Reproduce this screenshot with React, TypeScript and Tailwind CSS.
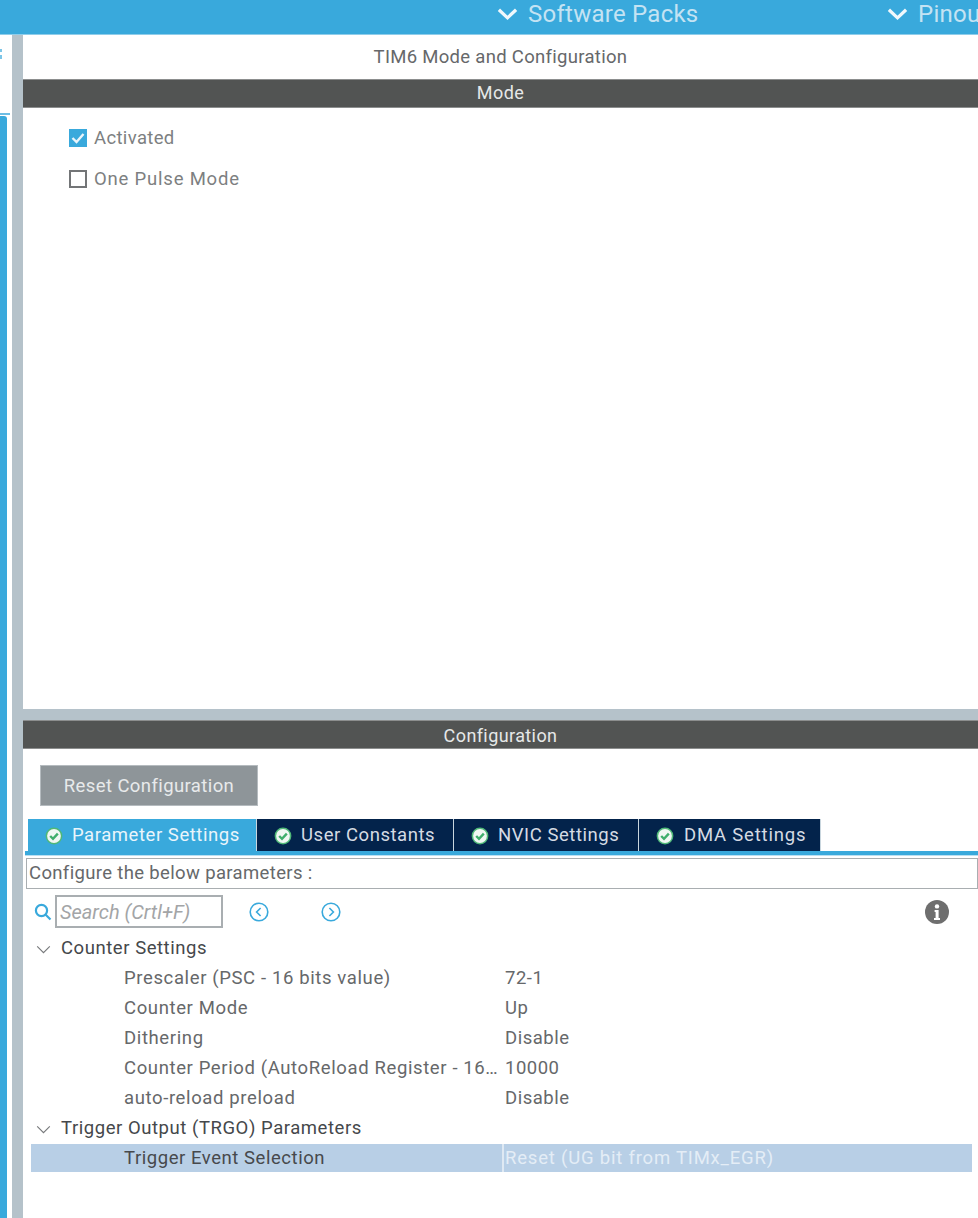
import React from "react";

const font = { fontFamily: "Roboto, sans-serif" };

function Chevron({ className }: { className: string }) {
  return (
    <svg viewBox="0 0 22 14" className={className} fill="none" stroke="currentColor" strokeWidth="3.4">
      <path d="M2 2.5 L11 11 L20 2.5" />
    </svg>
  );
}

function TabCheck() {
  return (
    <svg viewBox="0 0 18 18" className="h-[18px] w-[18px] shrink-0">
      <circle cx="9" cy="9" r="8.4" fill="#4fb878" />
      <circle cx="9" cy="9" r="6.9" fill="#f0f7f3" />
      <path d="M5.2 9 L8 11.8 L12.8 6.6" fill="none" stroke="#3fae6c" strokeWidth="2.4" />
    </svg>
  );
}

function Tab({ label, active, width, labelClass }: { label: string; active?: boolean; width: string; labelClass: string }) {
  return (
    <div
      className={`flex h-[32px] items-center gap-[9px] border-r border-[#c9d6de] pl-[17px] pt-[2px] text-[18.5px] ${width} ${
        active ? "bg-[#39a9dc] text-[#eaf5fb]" : "bg-[#03234b] text-[#d5dbe3]"
      }`}
    >
      <TabCheck />
      <span className={`whitespace-nowrap ${labelClass}`}>{label}</span>
    </div>
  );
}

function Row({ name, value }: { name: string; value: string }) {
  return (
    <div className="flex h-[30px] items-center pt-[2px] text-[18.5px] tracking-[0.62px] text-[#66686a]">
      <div className="w-[474px] shrink-0 truncate pl-[93px] pr-[5px]">{name}</div>
      <div className="whitespace-nowrap tracking-[0.5px]">{value}</div>
    </div>
  );
}

function Group({ label }: { label: string }) {
  return (
    <div className="flex h-[30px] items-center pt-[2px] text-[18.5px] tracking-[0.55px] text-[#45484b]">
      <div className="flex w-[30px] pl-[5px]">
        <svg viewBox="0 0 16 10" className="h-[9px] w-[15px]" fill="none" stroke="#77797b" strokeWidth="1.3">
          <path d="M1 1.5 L8 8.5 L15 1.5" />
        </svg>
      </div>
      <span className="whitespace-nowrap">{label}</span>
    </div>
  );
}

function Bar({ label, lower }: { label: string; lower?: boolean }) {
  return (
    <div
      className={`flex h-[29px] shrink-0 items-center justify-center border-y border-[#8c8e8e] bg-[#525453] text-[18px] tracking-[0.4px] text-[#e6e8e8] ${
        lower ? "pt-[1px]" : "pb-[2px]"
      }`}
    >
      {label}
    </div>
  );
}

export default function App() {
  return (
    <div className="flex h-[1218px] w-[978px] flex-col overflow-hidden bg-white" style={font}>
      <header className="flex h-[35px] shrink-0 items-center border-b border-[#8fcdea] bg-[#39a9dc] pb-[6px] text-[24px] tracking-[0.25px] text-[#c4e3f3]">
        <div className="ml-[497px] flex w-[390px] shrink-0 items-center gap-[10px]">
          <Chevron className="h-[14px] w-[21px] text-[#f0f8fc]" />
          <span className="whitespace-nowrap">Software Packs</span>
        </div>
        <div className="flex shrink-0 items-center gap-[10px]">
          <Chevron className="h-[14px] w-[21px] text-[#f0f8fc]" />
          <span className="whitespace-nowrap">Pinout</span>
        </div>
      </header>
      <div className="flex min-h-0 flex-1">
        <aside className="flex w-[12px] shrink-0 flex-col">
          <div className="mt-[14px] h-[3px] w-[2px] bg-[#7cc5e7]" />
          <div className="mt-[3px] h-[4px] w-[2px] bg-[#7cc5e7]" />
          <div className="mt-[54px] h-[2px] w-[10px] bg-[#6dbde4]" />
          <div className="mt-[1px] w-[7px] flex-1 rounded-tr-[3px] bg-[#39a9dc]" />
        </aside>
        <div className="w-[11px] shrink-0 bg-[#b5c2ca]" />
        <main className="flex min-w-0 flex-1 flex-col">
          <section className="flex h-[674px] shrink-0 flex-col">
            <div className="flex h-[44px] shrink-0 items-center justify-center pt-[2px] text-[18.5px] tracking-[0.3px] text-[#66686a]">
              TIM6 Mode and Configuration
            </div>
            <Bar label="Mode" />
            <div className="flex flex-col gap-[19px] pl-[46px] pt-[19px] text-[18.5px] text-[#7d7f81]">
              <label className="flex h-[22px] items-center gap-[7px] tracking-[0.35px]">
                <span className="flex h-[18px] w-[18px] items-center justify-center bg-[#39a9dc]">
                  <svg viewBox="0 0 18 18" className="h-[18px] w-[18px]" fill="none" stroke="#eaf5fb" strokeWidth="2.4">
                    <path d="M3.5 9 L7.5 13 L14.5 5" />
                  </svg>
                </span>
                <span className="pt-[1px]">Activated</span>
              </label>
              <label className="flex h-[22px] items-center gap-[7px] tracking-[0.8px]">
                <span className="h-[18px] w-[18px] border-2 border-[#737577] bg-white" />
                <span className="pt-[1px]">One Pulse Mode</span>
              </label>
            </div>
          </section>
          <div className="h-[11px] shrink-0 bg-[#b5c2ca]" />
          <section className="flex min-h-0 flex-1 flex-col">
            <Bar label="Configuration" lower />
            <div className="pl-[17px] pt-[16px]">
              <button className="flex h-[41px] w-[218px] items-center justify-center border border-[#b5bbbf] bg-[#8e9599] pt-[2px] text-[18.5px] tracking-[0.4px] text-[#e8eaeb]">
                Reset Configuration
              </button>
            </div>
            <div className="ml-[5px] mt-[13px] flex w-[793px]">
              <Tab label="Parameter Settings" active width="w-[229px]" labelClass="tracking-[0.55px]" />
              <Tab label="User Constants" width="w-[197px]" labelClass="tracking-[0.55px]" />
              <Tab label="NVIC Settings" width="w-[185px]" labelClass="tracking-[0.55px]" />
              <Tab label="DMA Settings" width="w-[182px]" labelClass="ml-[1px] tracking-[0.8px]" />
            </div>
            <div className="ml-[2px] h-[5px] shrink-0 border-b border-[#b8dff2] bg-[#39a9dc]" />
            <div className="ml-[3px] mt-[2px] flex h-[31px] items-center border border-[#a9aeb1] pl-[2px] text-[18.5px] tracking-[0.35px] text-[#66686a]">
              Configure the below parameters :
            </div>
            <div className="relative ml-[11px] mt-[6px] flex h-[33px] items-center">
              <svg viewBox="0 0 18 18" className="h-[18px] w-[18px]" fill="none" stroke="#39a9dc" strokeWidth="2.2">
                <circle cx="7.5" cy="7.5" r="5.6" />
                <path d="M11.5 11.5 L16.5 16.5" />
              </svg>
              <div className="ml-[3px] flex h-[33px] w-[168px] items-center border-2 border-[#a9aeb1] pl-[3px] text-[20px] italic text-[#a3a5a7]">
                Search (Crtl+F)
              </div>
              <svg viewBox="0 0 20 20" className="ml-[26px] h-[20px] w-[20px]" fill="none" stroke="#39a9dc" strokeWidth="1.6">
                <circle cx="10" cy="10" r="8.8" />
                <path d="M11.6 6 L7.6 10 L11.6 14" />
              </svg>
              <svg viewBox="0 0 20 20" className="ml-[52px] h-[20px] w-[20px]" fill="none" stroke="#39a9dc" strokeWidth="1.6">
                <circle cx="10" cy="10" r="8.8" />
                <path d="M8.4 6 L12.4 10 L8.4 14" />
              </svg>
              <svg viewBox="0 0 24 24" className="ml-[584px] h-[24px] w-[24px]">
                <circle cx="12" cy="12" r="12" fill="#6e6e6e" />
                <circle cx="12" cy="6.4" r="2.2" fill="#fff" />
                <path d="M9.6 10h4v8h1.4v2H9v-2h1.6v-6H9.6z" fill="#fff" />
              </svg>
            </div>
            <div className="ml-[8px] mr-[6px] mt-[5px] flex flex-col">
              <Group label="Counter Settings" />
              <Row name="Prescaler (PSC - 16 bits value)" value="72-1" />
              <Row name="Counter Mode" value="Up" />
              <Row name="Dithering" value="Disable" />
              <Row name="Counter Period (AutoReload Register - 16 bits value)" value="10000" />
              <Row name="auto-reload preload" value="Disable" />
              <Group label="Trigger Output (TRGO) Parameters" />
              <div className="mt-[1px] flex h-[28px] items-center bg-[#b8cfe6] text-[18.5px] tracking-[0.55px]">
                <div className="w-[471px] shrink-0 whitespace-nowrap pl-[93px] pt-[1px] text-[#47494c]">Trigger Event Selection</div>
                <div className="h-full w-[2px] shrink-0 bg-[#dfe9f3]" />
                <div className="whitespace-nowrap pl-[1px] pt-[1px] tracking-[0.8px] text-[#e4edf6]">Reset (UG bit from TIMx_EGR)</div>
              </div>
            </div>
          </section>
        </main>
      </div>
    </div>
  );
}
